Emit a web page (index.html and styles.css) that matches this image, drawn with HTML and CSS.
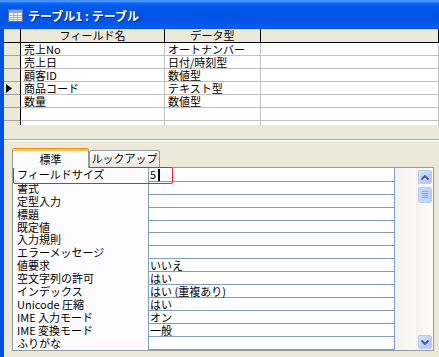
FILE: index.html
```html
<!DOCTYPE html>
<html lang="ja">
<head>
<meta charset="utf-8">
<link rel="stylesheet" href="styles.css">
</head>
<body>
<div class="title">
  <svg class="ticon" width="15" height="13" viewBox="0 0 15 13">
    <rect x="0.5" y="0.5" width="14" height="12" fill="#fff" stroke="#5a6f9c"/>
    <rect x="1" y="1" width="13" height="3" fill="#8ea3d6"/>
    <path d="M1 6.5H14M1 8.5H14M1 10.5H14M5.5 4V12M9.5 4V12" stroke="#9fb0d8" stroke-width="1"/>
  </svg>
  <span>テーブル1 : テーブル</span>
</div>
<div class="frame">
  <div class="grid">
    <div class="grow head"><div class="sel"></div><div class="c ctr">フィールド名</div><div class="c ctr">データ型</div><div class="c"></div></div>
    <div class="grow"><div class="sel"></div><div class="c">売上No</div><div class="c">オートナンバー</div><div class="c"></div></div>
    <div class="grow"><div class="sel"></div><div class="c">売上日</div><div class="c">日付/時刻型</div><div class="c"></div></div>
    <div class="grow"><div class="sel"></div><div class="c">顧客ID</div><div class="c">数値型</div><div class="c"></div></div>
    <div class="grow"><div class="sel"><svg width="6" height="9" viewBox="0 0 6 9"><path d="M0 0L6 4.5L0 9Z" fill="#000"/></svg></div><div class="c">商品コード</div><div class="c">テキスト型</div><div class="c"></div></div>
    <div class="grow"><div class="sel"></div><div class="c">数量</div><div class="c">数値型</div><div class="c"></div></div>
    <div class="grow"><div class="sel"></div><div class="c"></div><div class="c"></div><div class="c"></div></div>
    <div class="grow"><div class="sel"></div><div class="c"></div><div class="c"></div><div class="c"></div></div>
  </div>
  <div class="split"></div>
  <div class="tabs">
    <div class="tab active">標準</div>
    <div class="tab">ルックアップ</div>
  </div>
  <div class="panel">
    <div class="plist">
      <div class="prow first"><div class="lbl">フィールドサイズ</div><div class="val">5<span class="caret"></span></div></div>
      <div class="prow"><div class="lbl">書式</div><div class="val"></div></div>
      <div class="prow"><div class="lbl">定型入力</div><div class="val"></div></div>
      <div class="prow"><div class="lbl">標題</div><div class="val"></div></div>
      <div class="prow"><div class="lbl">既定値</div><div class="val"></div></div>
      <div class="prow"><div class="lbl">入力規則</div><div class="val"></div></div>
      <div class="prow"><div class="lbl">エラーメッセージ</div><div class="val"></div></div>
      <div class="prow"><div class="lbl">値要求</div><div class="val">いいえ</div></div>
      <div class="prow"><div class="lbl">空文字列の許可</div><div class="val">はい</div></div>
      <div class="prow"><div class="lbl">インデックス</div><div class="val">はい (重複あり)</div></div>
      <div class="prow"><div class="lbl">Unicode 圧縮</div><div class="val">はい</div></div>
      <div class="prow"><div class="lbl">IME 入力モード</div><div class="val">オン</div></div>
      <div class="prow"><div class="lbl">IME 変換モード</div><div class="val">一般</div></div>
      <div class="prow"><div class="lbl">ふりがな</div><div class="val"></div></div>
    </div>
    <div class="sbarea">
      <div class="sb">
        <div class="sbtn"><svg width="8" height="5" viewBox="0 0 8 5"><path d="M0.5 4.5L4 1L7.5 4.5" fill="none" stroke="#4d6185" stroke-width="2"/></svg></div>
        <div class="thumb"><svg width="6" height="8" viewBox="0 0 6 8"><path d="M0 0.5H6M0 2.5H6M0 4.5H6M0 6.5H6" stroke="#8ca5e6" stroke-width="1"/></svg></div>
        <div class="sbtn down"><svg width="8" height="5" viewBox="0 0 8 5"><path d="M0.5 0.5L4 4L7.5 0.5" fill="none" stroke="#4d6185" stroke-width="2"/></svg></div>
      </div>
    </div>
    <div class="hilite"></div>
  </div>
</div>
</body>
</html>
```

FILE: styles.css
```css
html, body {
  margin: 0;
  padding: 0;
}
body {
  width: 439px;
  height: 357px;
  overflow: hidden;
  background: #ECE9D8;
  font-family: "Noto Sans CJK JP", "Noto Sans", sans-serif;
  font-size: 11px;
  color: #000;
}
.title {
  height: 29px;
  box-sizing: border-box;
  display: flex;
  align-items: center;
  padding-left: 8px;
  padding-top: 1px;
  gap: 5px;
  color: #fff;
  font-weight: bold;
  font-size: 12px;
  background: linear-gradient(#2f80f8 0, #5aa2ff 1px, #1067f2 3px, #0058ea 7px, #0053e3 18px, #0059ec 25px, #0a60f0 28px, #0040c8 29px);
  text-shadow: 1px 1px #0a2d8a;
}
.ticon {
  display: block;
}
.frame {
  height: 328px;
  border-left: 4px solid #0850dc;
  display: flex;
  flex-direction: column;
}
.grid {
  height: 96px;
  overflow: hidden;
  background: #fff;
  flex: none;
}
.grow {
  display: grid;
  grid-template-columns: 17px 144px 96px 1fr;
  height: 13px;
}
.grow.head {
  height: 14px;
}
.c {
  box-sizing: border-box;
  border-right: 1px solid #c0c0c0;
  border-bottom: 1px solid #c0c0c0;
  line-height: 12px;
  padding-left: 3px;
  white-space: nowrap;
}
.sel {
  box-sizing: border-box;
  background: #ECE9D8;
  border-right: 1px solid #000;
  border-bottom: 1px solid #a0a0a0;
  display: flex;
  align-items: center;
  padding-left: 2px;
}
.head .c {
  background: #ECE9D8;
  border-right: 1px solid #000;
  border-bottom: 1px solid #000;
  line-height: 13px;
}
.head .sel {
  border-bottom: 1px solid #000;
}
.ctr {
  text-align: center;
  padding-left: 0;
}
.split {
  margin-top: 14px;
  height: 0;
  border-top: 1px solid #aca899;
  border-bottom: 1px solid #fff;
  flex: none;
}
.tabs {
  margin-top: 7px;
  height: 19px;
  padding-left: 8px;
  display: flex;
  align-items: flex-end;
  flex: none;
}
.tab {
  box-sizing: border-box;
  width: 71px;
  height: 17px;
  border: 1px solid #919b9c;
  border-bottom: none;
  border-radius: 3px 3px 0 0;
  background: linear-gradient(#ffffff, #f3f2ec 60%, #e6e4da);
  text-align: center;
  line-height: 15px;
  font-size: 11px;
}
.tab.active {
  width: 77px;
  height: 20px;
  background: #fcfcfe;
  border-top: 1px solid #e68b2c;
  box-shadow: inset 0 2px #ffc83c;
  line-height: 19px;
  position: relative;
  z-index: 1;
  margin-bottom: -1px;
  padding-top: 1px;
}
.panel {
  position: relative;
  margin-left: 8px;
  width: 422px;
  height: 184px;
  box-sizing: border-box;
  border: 1px solid #919b9c;
  background: #fcfcfe;
  display: flex;
  flex: none;
}
.plist {
  width: 382px;
  display: flex;
  flex-direction: column;
}
.prow {
  display: flex;
  height: 13px;
}
.prow.first {
  height: 14px;
}
.lbl {
  width: 135px;
  padding-left: 4px;
  box-sizing: border-box;
  line-height: 12px;
  white-space: nowrap;
}
.val {
  width: 247px;
  box-sizing: border-box;
  border-left: 1px solid #7f9db9;
  border-right: 1px solid #7f9db9;
  border-bottom: 1px solid #7f9db9;
  background: #fff;
  padding-left: 1px;
  line-height: 12px;
  white-space: nowrap;
  display: flex;
  align-items: flex-start;
}
.prow.first .val {
  line-height: 13px;
}
.caret {
  display: inline-block;
  width: 2px;
  height: 12px;
  background: #000;
  margin-left: 2px;
  margin-top: 1px;
}
.sbarea {
  width: 38px;
  background: linear-gradient(to right, #f3f2ed, #fbfbf8 60%, #f2f1ec);
  display: flex;
  justify-content: flex-end;
}
.sb {
  width: 17px;
  display: flex;
  flex-direction: column;
  align-items: flex-start;
  padding: 2px 0 1px 2px;
  box-sizing: border-box;
  background: linear-gradient(to right, #f3f1ec, #fefefb);
}
.sbtn, .thumb {
  box-sizing: border-box;
  width: 14px;
  height: 14px;
  border: 1px solid #b9cbf3;
  border-radius: 2px;
  background: linear-gradient(135deg, #d8e4fd, #bacffa 60%, #aec4f6);
  display: flex;
  align-items: center;
  justify-content: center;
}
.thumb {
  height: 16px;
  margin-top: 3px;
  background: linear-gradient(to right, #c8d7fc, #bad0fa);
}
.sbtn.down {
  margin-top: auto;
}
.hilite {
  position: absolute;
  left: 0;
  top: -1px;
  width: 160px;
  height: 17px;
  box-sizing: border-box;
  border: 1px solid #e8202a;
  border-radius: 2px;
}
```
